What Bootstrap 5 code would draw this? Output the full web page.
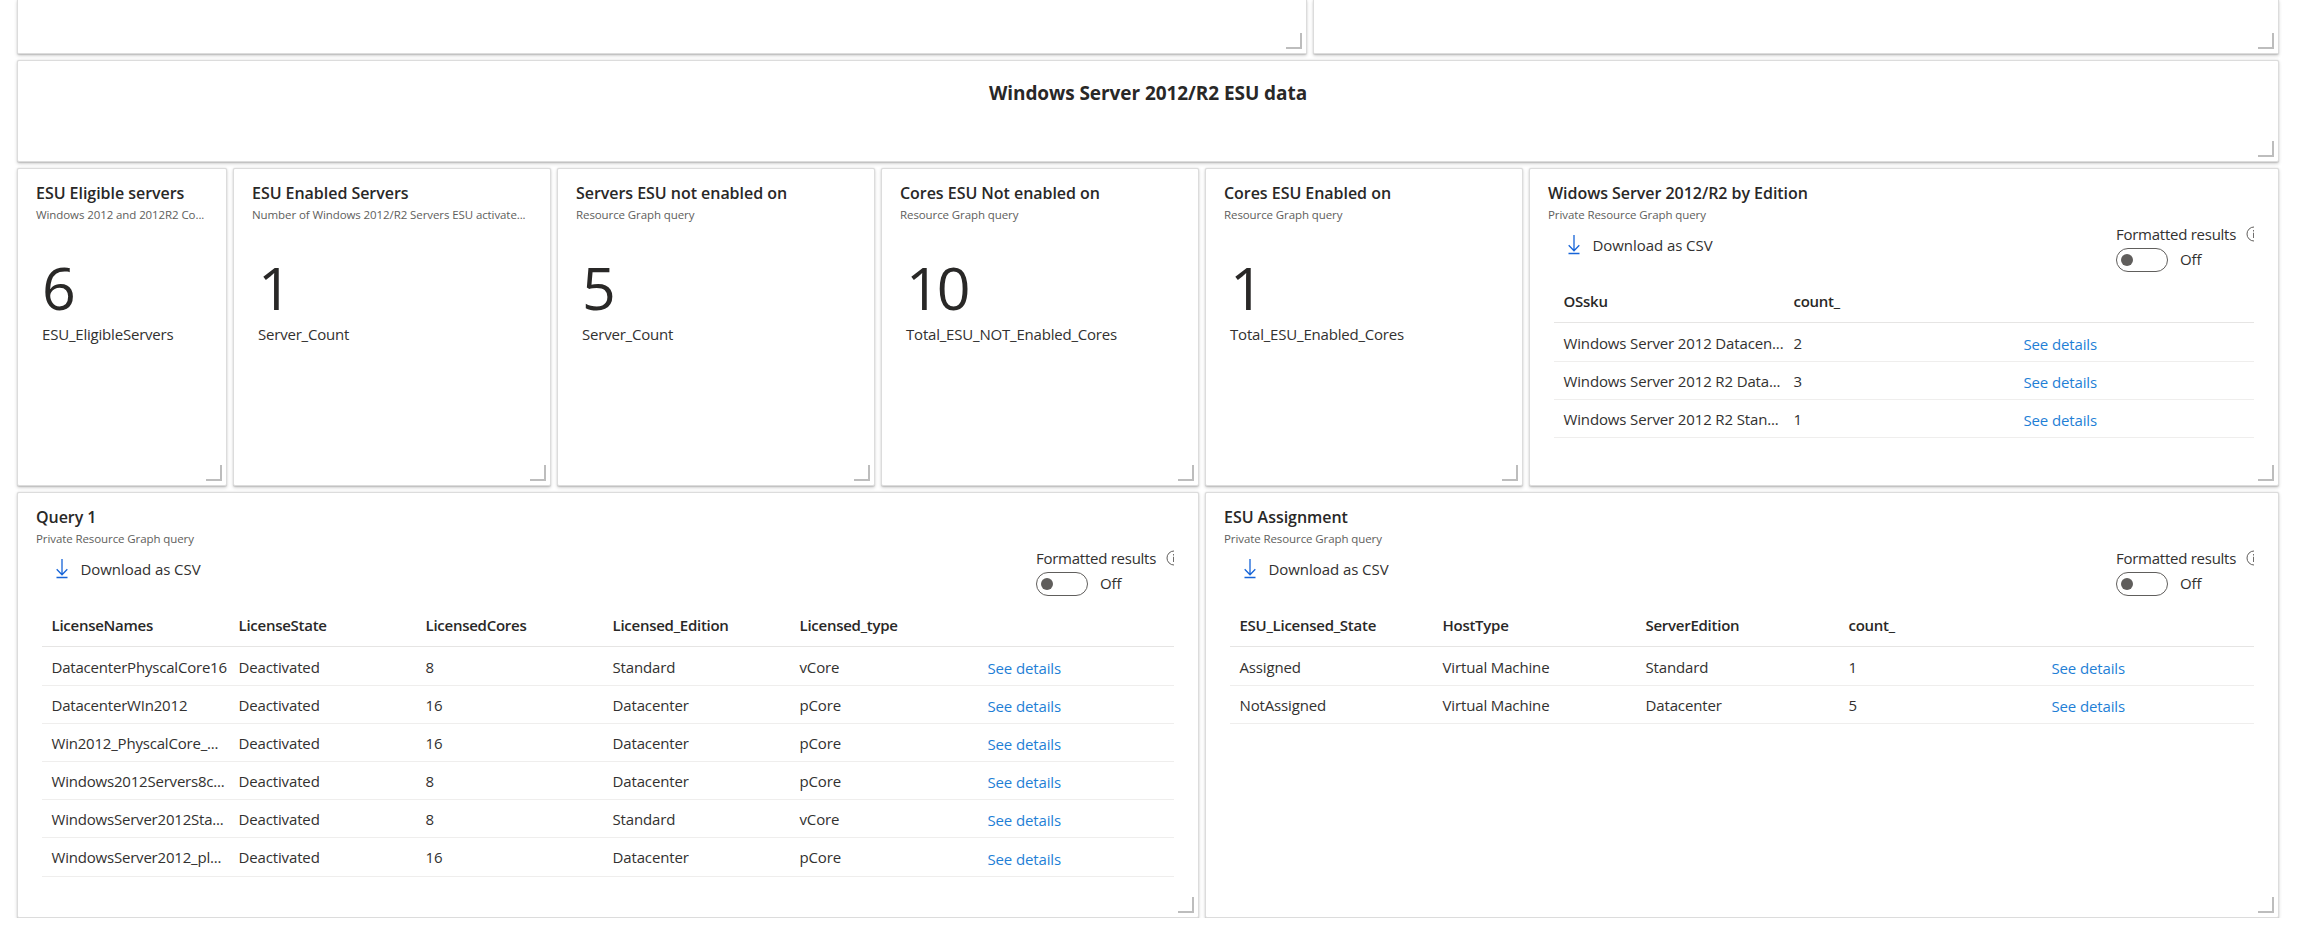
<!DOCTYPE html>
<html lang="en">
<head>
<meta charset="utf-8">
<title>ESU dashboard</title>
<link rel="stylesheet" href="https://cdn.jsdelivr.net/npm/bootstrap@5.3.0/dist/css/bootstrap.min.css">
<style>
body{font-family:"Open Sans","Noto Sans",sans-serif;font-size:15px;line-height:20px;letter-spacing:-.14px;color:#323130;background:#fff;overflow:hidden}
.board{width:2262px;margin-left:17px;gap:6px}
.tiles{display:grid;grid-template-columns:repeat(21,102px);gap:6px}
.s2{grid-column:span 2}.s3{grid-column:span 3}.s7{grid-column:span 7}.s9{grid-column:span 9}.s10{grid-column:span 10}.s11{grid-column:span 11}.s12{grid-column:span 12}.s21{grid-column:span 21}
.tile{position:relative;background:#fff;border:1px solid #dcdcdc;border-radius:2px;box-shadow:0 1.6px 3.6px rgba(0,0,0,.16),0 .6px 1.2px rgba(0,0,0,.14);min-width:0}
.tile::after{content:"";position:absolute;right:4px;bottom:4px;width:16px;height:16px;border:solid #bdbdbd;border-width:0 2px 2px 0}
.h-top{height:54px}.h-head{height:102px}.h-mid{height:318px}.h-low{height:426px}
.cut{border-top:0;border-top-left-radius:0;border-top-right-radius:0}
.board-title{font-size:19px;line-height:28px;font-weight:700;letter-spacing:-.07px;padding-top:18px;color:#292827;margin:0}
.tile-head{height:53px;padding:14px 18px 0}
.tile-name{font-size:16px;font-weight:600;line-height:20px;letter-spacing:-.04px;margin:0;color:#292827;white-space:nowrap}
.tile-sub{font-size:11.5px;line-height:16px;margin-top:4px;letter-spacing:-.09px;color:#605e5c;white-space:nowrap}
.figure-val{font-size:59px;line-height:60px;letter-spacing:-3px;padding:35px 0 0 24px;color:#292827}
.figure-lab{padding:7px 0 0 24px;letter-spacing:-.2px}
.tools{height:59px;margin:0 24px;overflow:hidden}
.dl{padding:13px 0 0 14px}
.dl svg{margin-right:12.5px;display:block}
.dl span{letter-spacing:-.06px}
.fmt{width:138px;padding-top:2px}
.fmt-lab{letter-spacing:-.26px;white-space:nowrap;width:200px}
.fmt-lab svg{margin-left:10px;flex:none}
.sw{width:52px;height:24px;border:1px solid #605e5c;border-radius:12px;padding-left:4px}
.sw i{width:12px;height:12px;border-radius:50%;background:#605e5c}
.sw-lab{margin:-2px 0 0 12px}
.grid-rows{margin:0 24px}
.gr{display:grid;border-bottom:1px solid #efeeed;height:38px;padding-top:9px;white-space:nowrap}
.gr>*{padding-left:9.5px}
.gr.hd{height:42px;padding-top:10px;font-weight:600;letter-spacing:-.26px;color:#292827;border-color:#e6e5e4}
.hd+.gr{height:39px;padding-top:10px}
.gr:nth-child(7){height:39px}
.gr a{color:#1f7fd6;text-decoration:none;padding-top:1px}
.gr:nth-child(7) a{padding-top:2px}
.c3{grid-template-columns:230px 230px 1fr}
.c5{grid-template-columns:repeat(4,203px) 1fr}
.c6{grid-template-columns:repeat(5,187px) 1fr}
.c6 a{padding-left:10.5px}
.tight{letter-spacing:-.2px}
</style>
</head>
<body>
<svg class="d-none">
  <symbol id="dl" viewBox="0 0 12 20"><path d="M6 0v16M.7 10.3 6 15.7l5.3-5.4M.5 18.5h11" fill="none" stroke="#1664d8" stroke-width="1.3"/></symbol>
  <symbol id="info" viewBox="0 0 16 16"><circle cx="8" cy="8" r="7" fill="none" stroke="#605e5c" stroke-width="1"/><path d="M7.7 6.8V12M7.7 4v1.4" stroke="#605e5c" stroke-width="1.2"/></symbol>
</svg>
<main class="board d-flex flex-column">
  <div class="tiles">
    <section class="tile cut h-top s12"></section>
    <section class="tile cut h-top s9"></section>
    <section class="tile h-head s21 text-center"><h1 class="board-title">Windows Server 2012/R2 ESU data</h1></section>

    <section class="tile h-mid s2">
      <div class="tile-head"><h2 class="tile-name">ESU Eligible servers</h2><div class="tile-sub">Windows 2012 and 2012R2 Co...</div></div>
      <div class="figure-val">6</div><div class="figure-lab">ESU_EligibleServers</div>
    </section>
    <section class="tile h-mid s3">
      <div class="tile-head"><h2 class="tile-name">ESU Enabled Servers</h2><div class="tile-sub">Number of Windows 2012/R2 Servers ESU activate...</div></div>
      <div class="figure-val">1</div><div class="figure-lab">Server_Count</div>
    </section>
    <section class="tile h-mid s3">
      <div class="tile-head"><h2 class="tile-name">Servers ESU not enabled on</h2><div class="tile-sub">Resource Graph query</div></div>
      <div class="figure-val">5</div><div class="figure-lab">Server_Count</div>
    </section>
    <section class="tile h-mid s3">
      <div class="tile-head"><h2 class="tile-name">Cores ESU Not enabled on</h2><div class="tile-sub">Resource Graph query</div></div>
      <div class="figure-val">10</div><div class="figure-lab">Total_ESU_NOT_Enabled_Cores</div>
    </section>
    <section class="tile h-mid s3">
      <div class="tile-head"><h2 class="tile-name">Cores ESU Enabled on</h2><div class="tile-sub">Resource Graph query</div></div>
      <div class="figure-val">1</div><div class="figure-lab">Total_ESU_Enabled_Cores</div>
    </section>
    <section class="tile h-mid s7">
      <div class="tile-head"><h2 class="tile-name">Widows Server 2012/R2 by Edition</h2><div class="tile-sub">Private Resource Graph query</div></div>
      <div class="tools d-flex justify-content-between">
        <div class="dl d-flex align-items-start"><svg width="12" height="20"><use href="#dl"/></svg><span>Download as CSV</span></div>
        <div class="fmt"><div class="fmt-lab d-flex align-items-center">Formatted results<svg width="16" height="16"><use href="#info"/></svg></div>
        <div class="d-flex align-items-center mt-1"><div class="sw d-flex align-items-center"><i></i></div><span class="sw-lab">Off</span></div></div>
      </div>
      <div class="grid-rows">
        <div class="gr c3 hd"><span>OSsku</span><span>count_</span></div>
        <div class="gr c3"><span>Windows Server 2012 Datacen...</span><span>2</span><a href="#">See details</a></div>
        <div class="gr c3"><span>Windows Server 2012 R2 Data...</span><span>3</span><a href="#">See details</a></div>
        <div class="gr c3"><span>Windows Server 2012 R2 Stan...</span><span>1</span><a href="#">See details</a></div>
      </div>
    </section>

    <section class="tile h-low s11">
      <div class="tile-head"><h2 class="tile-name">Query 1</h2><div class="tile-sub">Private Resource Graph query</div></div>
      <div class="tools d-flex justify-content-between">
        <div class="dl d-flex align-items-start"><svg width="12" height="20"><use href="#dl"/></svg><span>Download as CSV</span></div>
        <div class="fmt"><div class="fmt-lab d-flex align-items-center">Formatted results<svg width="16" height="16"><use href="#info"/></svg></div>
        <div class="d-flex align-items-center mt-1"><div class="sw d-flex align-items-center"><i></i></div><span class="sw-lab">Off</span></div></div>
      </div>
      <div class="grid-rows">
        <div class="gr c6 hd"><span>LicenseNames</span><span>LicenseState</span><span>LicensedCores</span><span>Licensed_Edition</span><span>Licensed_type</span></div>
        <div class="gr c6"><span class="tight">DatacenterPhyscalCore16</span><span>Deactivated</span><span>8</span><span>Standard</span><span>vCore</span><a href="#">See details</a></div>
        <div class="gr c6"><span class="tight">DatacenterWIn2012</span><span>Deactivated</span><span>16</span><span>Datacenter</span><span>pCore</span><a href="#">See details</a></div>
        <div class="gr c6"><span class="tight">Win2012_PhyscalCore_...</span><span>Deactivated</span><span>16</span><span>Datacenter</span><span>pCore</span><a href="#">See details</a></div>
        <div class="gr c6"><span class="tight">Windows2012Servers8c...</span><span>Deactivated</span><span>8</span><span>Datacenter</span><span>pCore</span><a href="#">See details</a></div>
        <div class="gr c6"><span class="tight">WindowsServer2012Sta...</span><span>Deactivated</span><span>8</span><span>Standard</span><span>vCore</span><a href="#">See details</a></div>
        <div class="gr c6"><span class="tight">WindowsServer2012_pl...</span><span>Deactivated</span><span>16</span><span>Datacenter</span><span>pCore</span><a href="#">See details</a></div>
      </div>
    </section>
    <section class="tile h-low s10">
      <div class="tile-head"><h2 class="tile-name">ESU Assignment</h2><div class="tile-sub">Private Resource Graph query</div></div>
      <div class="tools d-flex justify-content-between">
        <div class="dl d-flex align-items-start"><svg width="12" height="20"><use href="#dl"/></svg><span>Download as CSV</span></div>
        <div class="fmt"><div class="fmt-lab d-flex align-items-center">Formatted results<svg width="16" height="16"><use href="#info"/></svg></div>
        <div class="d-flex align-items-center mt-1"><div class="sw d-flex align-items-center"><i></i></div><span class="sw-lab">Off</span></div></div>
      </div>
      <div class="grid-rows">
        <div class="gr c5 hd"><span>ESU_Licensed_State</span><span>HostType</span><span>ServerEdition</span><span>count_</span></div>
        <div class="gr c5"><span>Assigned</span><span>Virtual Machine</span><span>Standard</span><span>1</span><a href="#">See details</a></div>
        <div class="gr c5"><span>NotAssigned</span><span>Virtual Machine</span><span>Datacenter</span><span>5</span><a href="#">See details</a></div>
      </div>
    </section>
  </div>
</main>
<script src="https://cdn.jsdelivr.net/npm/bootstrap@5.3.0/dist/js/bootstrap.bundle.min.js"></script>
</body>
</html>
